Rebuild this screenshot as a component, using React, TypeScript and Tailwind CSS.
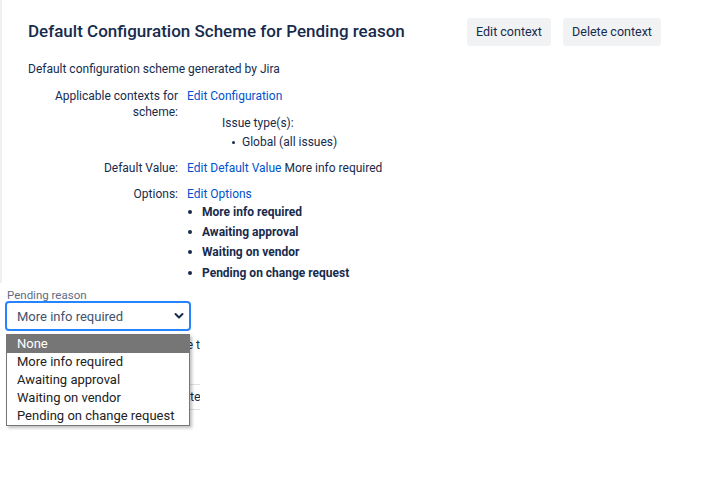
import React from "react";

const options = ["More info required", "Awaiting approval", "Waiting on vendor", "Pending on change request"];

export default function App() {
  return (
    <div className="relative w-[704px] h-[478px] bg-white overflow-hidden text-[#172b4d] font-['Roboto',sans-serif]">
      <div className="border-l-2 border-[#eef0f2] h-[283px] pl-[26px] pr-[43px] pt-[18px]">
        <div className="flex items-center h-[28px]">
          <h2 className="flex-1 -mt-[2px] text-[17px] leading-[28px] font-medium text-[#172b4d]">Default Configuration Scheme for Pending reason</h2>
          <div className="flex gap-[12px]">
            <button className="h-[28px] w-[84px] rounded-[3px] bg-[#f1f2f4] text-[12.5px] text-[#172b4d]">Edit context</button>
            <button className="h-[28px] w-[98px] rounded-[3px] bg-[#f1f2f4] text-[12.5px] text-[#172b4d]">Delete context</button>
          </div>
        </div>
        <p className="mt-[15px] text-[12px] leading-[16px]">Default configuration scheme generated by Jira</p>
        <div className="mt-[11px] grid grid-cols-[150px_1fr] gap-x-[9px] text-[12px] leading-[16px]">
          <div className="text-right">Applicable contexts for scheme:</div>
          <div>
            <a className="text-[#0052cc]">Edit Configuration</a>
            <div className="ml-[35px] mt-[11px]">Issue type(s):</div>
            <div className="ml-[45px] mt-[3px] flex items-center gap-[7px]">
              <span className="w-[3px] h-[3px] rounded-full bg-[#172b4d]" />
              <span>Global (all issues)</span>
            </div>
          </div>
          <div className="text-right mt-[10px]">Default Value:</div>
          <div className="mt-[10px]">
            <a className="text-[#0052cc]">Edit Default Value</a> More info required
          </div>
          <div className="text-right mt-[10px]">Options:</div>
          <div className="mt-[10px]">
            <a className="text-[#0052cc]">Edit Options</a>
            <ul className="mt-[0px]">
              {options.map((o) => (
                <li key={o} className="h-[20.2px] flex items-center font-bold">
                  <span className="w-[4px] h-[4px] rounded-full bg-[#172b4d] ml-[1px] mr-[10px]" />
                  <span>{o}</span>
                </li>
              ))}
            </ul>
          </div>
        </div>
      </div>

      <div className="w-[200px] overflow-hidden">
        <div className="pl-[7px] pt-[6px] text-[11.5px] leading-[12px] text-[#5e6c84]">Pending reason</div>
        <div className="ml-[5px] w-[186px] h-[30px] border-2 border-[#2684ff] rounded-[4px] flex items-center justify-between pl-[10px] pr-[4px] text-[13px] text-[#42526e]">
          <span className="pt-[2px]">More info required</span>
          <svg width="10" height="8" viewBox="0 0 10 8" className="mr-[1px]">
            <path d="M1.5 2 L5 5.5 L8.5 2" fill="none" stroke="#172b4d" strokeWidth="2" strokeLinecap="round" strokeLinejoin="round" />
          </svg>
        </div>
        <div className="ml-[8px] mt-[6px] flex justify-end overflow-hidden whitespace-nowrap text-[12px] leading-[16px]">
          <span>Select the reason why the request is on hold. Only the t</span>
        </div>
        <div className="mt-[31px] flex justify-end whitespace-nowrap">
          <span className="h-[26px] border border-[#dfe1e6] flex items-center pl-[12px] text-[12.5px] -mr-[28px] w-[80px]">Update</span>
        </div>
      </div>

      <div className="absolute left-[6px] top-[334px] w-[184px] border border-[#767676] bg-white shadow-[2px_2px_3px_rgba(0,0,0,0.25)] text-[13px] leading-[18px] text-[#222]">
        <div className="bg-[#767676] text-white pl-[10px]">None</div>
        {options.map((o) => (
          <div key={o} className="pl-[10px]">{o}</div>
        ))}
      </div>
    </div>
  );
}
